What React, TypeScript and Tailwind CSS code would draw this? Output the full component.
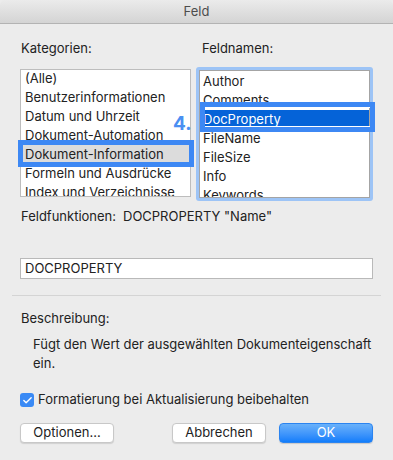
import { Check } from "lucide-react"

const kategorien = [
  "(Alle)",
  "Benutzerinformationen",
  "Datum und Uhrzeit",
  "Dokument-Automation",
  "Dokument-Information",
  "Formeln und Ausdrücke",
  "Index und Verzeichnisse",
]

const feldnamen = [
  "Author",
  "Comments",
  "DocProperty",
  "FileName",
  "FileSize",
  "Info",
  "Keywords",
]

function Button({ label, primary }: { label: string; primary?: boolean }) {
  return (
    <div
      className={
        primary
          ? "w-[94px] h-[20px] flex items-center justify-center rounded-[4px] bg-gradient-to-b from-[#69b1fa] to-[#0f7dfb] border border-[#2b84f0] text-white text-[13px] shadow-[0_1px_1px_rgba(0,0,0,0.15)]"
          : "w-[94px] h-[20px] flex items-center justify-center rounded-[4px] bg-white border border-[#c8c8c8] text-[#222] text-[13px] shadow-[0_1px_1px_rgba(0,0,0,0.12)]"
      }
    >
      {label}
    </div>
  )
}

export default function App() {
  return (
    <div
      className="w-[393px] h-[460px] bg-[#ececec] overflow-hidden relative text-[#222]"
      style={{ fontFamily: "Inter, 'Liberation Sans', sans-serif" }}
    >

      {/* TITLE BAR */}

      <div className="h-[24px] rounded-t-[5px] bg-gradient-to-b from-[#ebebeb] to-[#d4d4d4] border-b border-[#b3b3b3] flex items-center justify-center text-[13px] text-[#4d4d4d]">
        Feld
      </div>

      <div className="px-[20px]">

        {/* LABELS */}

        <div className="flex mt-[17px] h-[16px] items-center text-[13px]">
          <div className="w-[178px] pl-[1px]">Kategorien:</div>
          <div className="pl-[4px]">Feldnamen:</div>
        </div>

        {/* LISTS */}

        <div className="flex mt-[10px] h-[134px]">

          <div className="w-[173px] h-[128px] mt-[2px] bg-white border border-[#bdbdbd] overflow-hidden">
            <div className="-mt-[1px]">
              {kategorien.map((k, i) => (
                <div
                  key={k}
                  className={
                    "h-[19px] flex items-center pl-[4px] text-[13px] " +
                    (i === 4 ? "bg-[#dcdcdc]" : "")
                  }
                >
                  {k}
                </div>
              ))}
            </div>
          </div>

          <div className="ml-[5px] w-[179px] h-[134px] rounded-[3px] bg-[#9dc4f6] p-[3px]">
            <div className="w-full h-full bg-white border border-[#a4a4a4] overflow-hidden">
              <div className="pt-[1px]">
                {feldnamen.map((f, i) => (
                  <div
                    key={f}
                    className={
                      "h-[19px] flex items-center pl-[3px] text-[13px] " +
                      (i === 2 ? "bg-[#0563d8] text-white" : "")
                    }
                  >
                    {f}
                  </div>
                ))}
              </div>
            </div>
          </div>

        </div>

        {/* FELDFUNKTIONEN */}

        <div className="flex mt-[8px] h-[16px] items-center text-[13px] pl-[1px]">
          <span className="w-[102px]">Feldfunktionen:</span>
          <span>DOCPROPERTY "Name"</span>
        </div>

        <div className="mt-[33px] h-[21px] w-[353px] bg-white border border-[#b9b9b9] flex items-center pl-[4px] text-[13px]">
          DOCPROPERTY
        </div>

      </div>

      <div className="mx-[12px] mt-[16px] h-px bg-[#d4d4d4]"></div>

      <div className="px-[20px]">

        {/* BESCHREIBUNG */}

        <div className="mt-[15px] h-[16px] flex items-center text-[13px] pl-[1px]">
          Beschreibung:
        </div>

        <div className="mt-[8px] pl-[13px] text-[13px] leading-[19px]">
          Fügt den Wert der ausgewählten Dokumenteigenschaft
          <br />
          ein.
        </div>

        {/* CHECKBOX */}

        <div className="mt-[19px] flex items-center h-[16px] text-[13px]">
          <div className="w-[14px] h-[14px] rounded-[3px] bg-[#3a8af5] flex items-center justify-center">
            <Check size={11} strokeWidth={3} className="text-white" />
          </div>
          <span className="ml-[4px]">Formatierung bei Aktualisierung beibehalten</span>
        </div>

        {/* BUTTONS */}

        <div className="mt-[15px] flex">
          <Button label="Optionen..." />
          <div className="ml-[58px]">
            <Button label="Abbrechen" />
          </div>
          <div className="ml-[13px]">
            <Button label="OK" primary />
          </div>
        </div>

      </div>

      {/* ANNOTATIONS */}

      <div className="absolute left-[18px] top-[140px] w-[176px] h-[27px] border-[5px] border-[#3d88f4]"></div>

      <div className="absolute left-[200px] top-[102px] w-[175px] h-[30px] border-[5px] border-[#3d88f4]">
        <div className="w-full h-full border-y border-white"></div>
      </div>

      <div className="absolute left-[173px] top-[114px] text-[19px] font-bold text-[#4a8ff2] leading-[20px]">
        4.
      </div>

    </div>
  )
}
